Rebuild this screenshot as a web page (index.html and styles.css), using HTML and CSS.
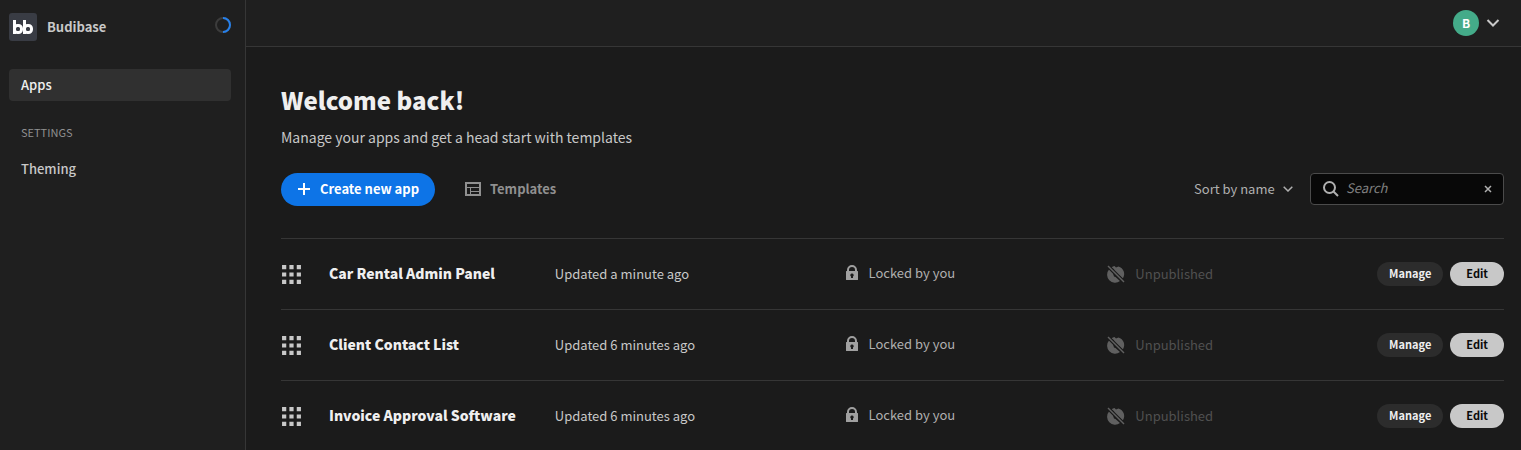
FILE: index.html
```html
<!DOCTYPE html>
<html lang="en">
<head>
    <meta charset="UTF-8">
    <meta name="viewport" content="width=device-width, initial-scale=1.0">
    <title>Budibase</title>
    <link rel="stylesheet" href="styles.css">
</head>
<body>
    <!-- shared icons -->
    <svg class="icon-defs" aria-hidden="true">
        <symbol id="icon-grid" viewBox="0 0 20 20">
            <path d="M1 1h4v4H1zM8 1h4v4H8zM15 1h4v4h-4zM1 8h4v4H1zM8 8h4v4H8zM15 8h4v4h-4zM1 15h4v4H1zM8 15h4v4H8zM15 15h4v4h-4z"/>
        </symbol>
        <symbol id="icon-lock" viewBox="0 0 14 16">
            <path fill-rule="evenodd" d="M2 6V5a5 5 0 0 1 10 0v1h.5a.5.5 0 0 1 .5.5v8a.5.5 0 0 1-.5.5h-11a.5.5 0 0 1-.5-.5v-8A.5.5 0 0 1 1.500 6zm2 0h6V5a3 3 0 0 0-6 0zm3 2.500a1.700 1.700 0 0 0-1 3.100V13h2v-1.400a1.700 1.700 0 0 0-1-3.100z"/>
        </symbol>
        <symbol id="icon-globe-strike" viewBox="0 0 18 18">
            <path d="M2 4.500 6 8.500l1 3 1.500.5 4.500 4A8 8 0 0 1 2 4.500z"/>
            <path d="M4.500 2.400A8 8 0 0 1 7.500 1.100L9 2.500 11.500 1.400A8 8 0 0 1 15.800 13.500L12.500 10.500l-1-.2-4-4-.5-2z"/>
            <path d="M1 1 17 17" fill="none" stroke="#1b1b1b" stroke-width="3.500"/>
            <path d="M1 1 17 17" fill="none" stroke="currentColor" stroke-width="1.500"/>
        </symbol>
    </svg>

    <div class="app">
        <aside class="sidebar">
            <div class="brand">
                <svg class="brand-logo" viewBox="0 0 28 28" aria-hidden="true">
                    <rect width="28" height="28" rx="3" fill="#393c44"/>
                    <rect x="4" y="7" width="3" height="14" fill="#fff"/>
                    <rect x="14" y="7" width="3" height="14" fill="#fff"/>
                    <g fill="none" stroke="#fff" stroke-width="3">
                        <rect x="5.500" y="12.500" width="7" height="7" rx="3"/>
                        <rect x="15.500" y="12.500" width="7" height="7" rx="3"/>
                    </g>
                </svg>
                <span class="brand-name">Budibase</span>
                <svg class="spinner" viewBox="0 0 16 16" aria-hidden="true">
                    <circle cx="8" cy="8" r="7" fill="none" stroke="#3c3c3c" stroke-width="2"/>
                    <path d="M8 1a7 7 0 0 1 0 14" fill="none" stroke="#2680eb" stroke-width="2"/>
                </svg>
            </div>
            <nav class="nav">
                <a class="nav-item active" href="#">Apps</a>
                <h2 class="nav-heading">Settings</h2>
                <a class="nav-item" href="#">Theming</a>
            </nav>
        </aside>

        <div class="main">
            <header class="topbar">
                <button type="button" class="user-menu" aria-label="User menu">
                    <span class="avatar">B</span>
                    <svg class="user-chevron" viewBox="0 0 14 8" aria-hidden="true"><path d="M1.500 1 7 6.500 12.500 1"/></svg>
                </button>
            </header>

            <main class="content">
                <h1>Welcome back!</h1>
                <p class="subtitle">Manage your apps and get a head start with templates</p>

                <div class="toolbar">
                    <button type="button" class="btn-create">
                        <svg class="icon-plus" viewBox="0 0 14 14" aria-hidden="true"><path d="M7 1v12M1 7h12"/></svg>
                        Create new app
                    </button>
                    <button type="button" class="btn-templates">
                        <svg class="icon-templates" viewBox="0 0 16 14" aria-hidden="true">
                            <path d="M1 1h14v12H1z" stroke-width="2"/>
                            <path d="M1 5.500h14M5.500 5.500V13M5.500 9.500H15"/>
                        </svg>
                        Templates
                    </button>
                    <div class="filters">
                        <div class="sort">
                            <select class="sort-select" aria-label="Sort apps">
                                <option>Sort by name</option>
                                <option>Sort by date</option>
                            </select>
                            <svg class="sort-chevron" viewBox="0 0 10 6" aria-hidden="true"><path d="M.7.7 5 5 9.300.7"/></svg>
                        </div>
                        <div class="search">
                            <svg class="icon-search" viewBox="0 0 16 16" aria-hidden="true"><circle cx="6.500" cy="6.500" r="5.500"/><path d="M10.500 10.500 15 15"/></svg>
                            <input type="text" class="search-input" placeholder="Search" aria-label="Search apps">
                            <button type="button" class="search-clear" aria-label="Clear search">
                                <svg viewBox="0 0 8 8" aria-hidden="true"><path d="M1 1l6 6M7 1 1 7"/></svg>
                            </button>
                        </div>
                    </div>
                </div>

                <div class="app-list">
                    <div class="app-row">
                        <svg class="icon-grid"><use href="#icon-grid"/></svg>
                        <h3 class="app-name">Car Rental Admin Panel</h3>
                        <span class="updated">Updated a minute ago</span>
                        <span class="locked"><svg class="icon-lock"><use href="#icon-lock"/></svg>Locked by you</span>
                        <span class="status"><svg class="icon-globe"><use href="#icon-globe-strike"/></svg>Unpublished</span>
                        <div class="actions">
                            <button type="button" class="btn-small">Manage</button>
                            <button type="button" class="btn-small btn-edit">Edit</button>
                        </div>
                    </div>
                    <div class="app-row">
                        <svg class="icon-grid"><use href="#icon-grid"/></svg>
                        <h3 class="app-name">Client Contact List</h3>
                        <span class="updated">Updated 6 minutes ago</span>
                        <span class="locked"><svg class="icon-lock"><use href="#icon-lock"/></svg>Locked by you</span>
                        <span class="status"><svg class="icon-globe"><use href="#icon-globe-strike"/></svg>Unpublished</span>
                        <div class="actions">
                            <button type="button" class="btn-small">Manage</button>
                            <button type="button" class="btn-small btn-edit">Edit</button>
                        </div>
                    </div>
                    <div class="app-row">
                        <svg class="icon-grid"><use href="#icon-grid"/></svg>
                        <h3 class="app-name">Invoice Approval Software</h3>
                        <span class="updated">Updated 6 minutes ago</span>
                        <span class="locked"><svg class="icon-lock"><use href="#icon-lock"/></svg>Locked by you</span>
                        <span class="status"><svg class="icon-globe"><use href="#icon-globe-strike"/></svg>Unpublished</span>
                        <div class="actions">
                            <button type="button" class="btn-small">Manage</button>
                            <button type="button" class="btn-small btn-edit">Edit</button>
                        </div>
                    </div>
                </div>
            </main>
        </div>
    </div>
</body>
</html>
```
FILE: styles.css
```css
* {
    box-sizing: border-box;
}

body {
    margin: 0;
    background-color: #1b1b1b;
    color: #c8c8c8;
    font-family: "Noto Sans CJK SC", "Noto Sans", sans-serif;
    font-size: 13px;
    line-height: 20px;
}

h1, h2, h3, p {
    margin: 0;
}

button, input, select {
    font-family: inherit;
    font-size: inherit;
    line-height: inherit;
    color: inherit;
    background: none;
    border: none;
    padding: 0;
    margin: 0;
}

button {
    cursor: pointer;
}

svg {
    display: block;
    flex: none;
    fill: currentColor;
}

.icon-defs {
    display: none;
}

.app {
    display: flex;
    height: 100vh;
}

/* Sidebar */
.sidebar {
    width: 246px;
    flex: none;
    padding: 13px 14px 0 9px;
    background-color: #1f1f1f;
    border-right: 1px solid #363636;
}

.brand {
    display: flex;
    align-items: center;
    height: 28px;
    margin-bottom: 28px;
}

.brand-logo {
    width: 28px;
    height: 28px;
    margin-right: 10px;
}

.brand-name {
    flex: 1;
    font-weight: 700;
}

.spinner {
    width: 16px;
    height: 16px;
    align-self: flex-start;
    margin-top: 4px;
}

.nav {
    display: flex;
    flex-direction: column;
}

.nav-item {
    padding: 6px 12px;
    border-radius: 4px;
    color: #c8c8c8;
    font-weight: 500;
    text-decoration: none;
}

.nav-item.active {
    background-color: #303030;
    color: #efefef;
}

.nav-heading {
    margin: 21px 12px 11px;
    color: #909090;
    font-size: 11px;
    font-weight: 400;
    text-transform: uppercase;
}

/* Main area */
.main {
    display: flex;
    flex-direction: column;
    flex: 1;
    min-width: 0;
}

.topbar {
    display: flex;
    flex: none;
    align-items: center;
    justify-content: flex-end;
    height: 47px;
    padding-right: 21px;
    background-color: #1f1f1f;
    border-bottom: 1px solid #363636;
}

.user-menu {
    display: flex;
    align-items: center;
    gap: 7px;
}

.avatar {
    width: 26px;
    border-radius: 50%;
    background-color: #44ab89;
    color: #fff;
    font-size: 12px;
    font-weight: 700;
    line-height: 26px;
    text-align: center;
}

.user-chevron {
    width: 14px;
    height: 8px;
    fill: none;
    stroke: currentColor;
    stroke-width: 2;
}

.content {
    flex: 1;
    overflow-y: auto;
    scrollbar-width: none;
    padding: 35px 17px 0 35px;
}

h1 {
    color: #efefef;
    font-size: 24px;
    font-weight: 900;
    line-height: 36px;
}

.subtitle {
    margin-top: 7px;
    font-size: 14px;
    line-height: 24px;
}

.toolbar {
    display: flex;
    align-items: flex-start;
    margin: 24px 0 32px;
}

.btn-create,
.btn-templates {
    display: flex;
    align-items: center;
    gap: 9px;
    height: 33px;
    padding-bottom: 2px;
    font-weight: 700;
}

.btn-create {
    padding: 0 16px 2px;
    border-radius: 17px;
    background-color: #0d74e7;
    color: #fff;
}

.btn-templates {
    margin-left: 30px;
    color: #909090;
}

.icon-plus {
    width: 14px;
    height: 14px;
    fill: none;
    stroke: currentColor;
    stroke-width: 2;
}

.icon-templates {
    width: 16px;
    height: 14px;
    fill: none;
    stroke: currentColor;
}

.filters {
    display: flex;
    align-items: center;
    gap: 17px;
    margin-left: auto;
}

.sort {
    display: flex;
    align-items: center;
    gap: 8px;
    color: #b0b0b0;
}

.sort-select {
    appearance: none;
}

.sort-chevron {
    width: 10px;
    height: 6px;
    fill: none;
    stroke: currentColor;
    stroke-width: 1.5;
}

.search {
    display: flex;
    align-items: center;
    width: 194px;
    height: 32px;
    padding: 0 11px 0 12px;
    border: 1px solid #4b4b4b;
    border-radius: 4px;
    background-color: #080808;
    color: #b0b0b0;
}

.icon-search {
    width: 16px;
    height: 16px;
    fill: none;
    stroke: currentColor;
    stroke-width: 2;
}

.search-input {
    flex: 1;
    min-width: 0;
    margin-left: 7px;
    padding-bottom: 2px;
    outline: none;
}

.search-input::placeholder {
    color: #808080;
    font-style: italic;
}

.search-clear svg {
    width: 8px;
    height: 8px;
    fill: none;
    stroke: currentColor;
    stroke-width: 1.5;
}

/* App list */
.app-row {
    display: grid;
    grid-template-columns: 48px 226fr 290fr 263fr 270fr auto;
    align-items: center;
    height: 71px;
    border-top: 1px solid #363636;
}

.icon-grid {
    width: 21px;
    height: 21px;
}

.app-name {
    padding-bottom: 2px;
    color: #efefef;
    font-size: 14px;
    font-weight: 900;
}

.locked,
.status {
    display: flex;
    align-items: center;
    gap: 10px;
}

.locked {
    padding-bottom: 2px;
    color: #b0b0b0;
}

.icon-lock {
    width: 14px;
    height: 16px;
    color: #a0a0a0;
}

.status {
    color: #505050;
}

.icon-globe {
    width: 18px;
    height: 18px;
    color: #606060;
}

.actions {
    display: flex;
    gap: 7px;
}

.btn-small {
    height: 24px;
    padding: 0 12px 2px;
    border-radius: 12px;
    background-color: #2c2c2c;
    color: #efefef;
    font-size: 11px;
    font-weight: 700;
}

.btn-edit {
    padding: 0 16px 2px;
    background-color: #c8c8c8;
    color: #0a0a0a;
}
```
